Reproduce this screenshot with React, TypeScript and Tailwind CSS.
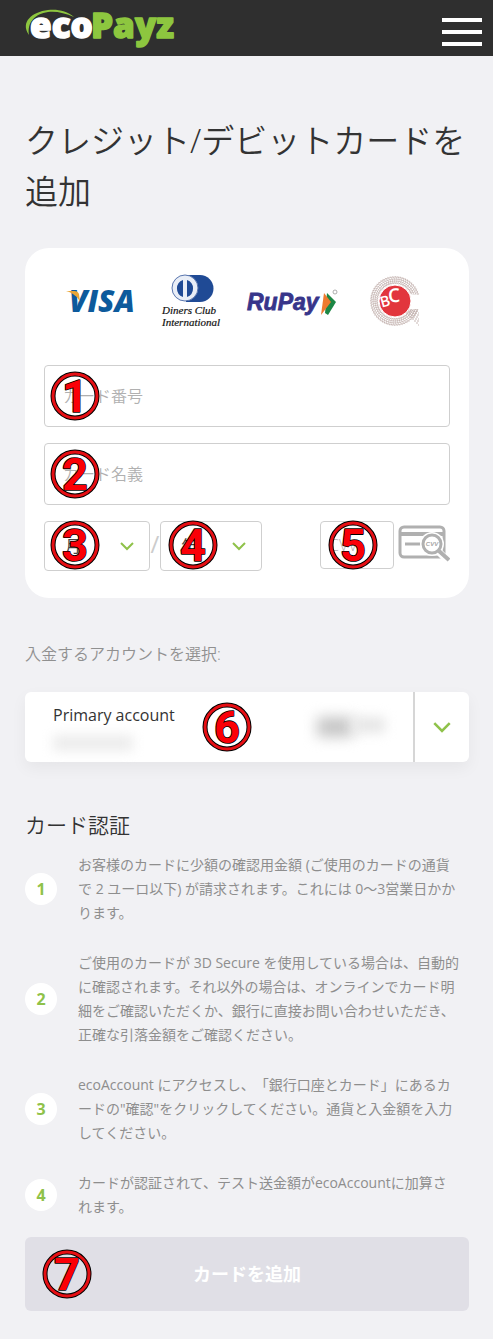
import React, { useState } from 'react';

interface MarkerProps {
  value: number;
  className?: string;
}

interface Step {
  id: number;
  text: string;
}

const steps: Step[] = [
  {
    id: 1,
    text: 'お客様のカードに少額の確認用金額 (ご使用のカードの通貨\nで 2 ユーロ以下) が請求されます。これには 0〜3営業日かか\nります。',
  },
  {
    id: 2,
    text: 'ご使用のカードが 3D Secure を使用している場合は、自動的\nに確認されます。それ以外の場合は、オンラインでカード明\n細をご確認いただくか、銀行に直接お問い合わせいただき、\n正確な引落金額をご確認ください。',
  },
  {
    id: 3,
    text: 'ecoAccount にアクセスし、「銀行口座とカード」にあるカ\nードの"確認"をクリックしてください。通貨と入金額を入力\nしてください。',
  },
  {
    id: 4,
    text: 'カードが認証されて、テスト送金額がecoAccountに加算さ\nれます。',
  },
];

// Red numbered marker that sits on top of a control
const Marker: React.FC<MarkerProps> = ({ value, className = '' }) => (
  <svg
    width="50"
    height="50"
    viewBox="0 0 50 50"
    className={`pointer-events-none absolute overflow-visible ${className}`}
  >
    <circle cx="25" cy="25" r="22" fill="none" stroke="#000" strokeWidth="5" />
    <circle cx="25" cy="25" r="22" fill="none" stroke="#e60f14" strokeWidth="3" />
    <text
      x="25"
      y="41"
      textAnchor="middle"
      fontFamily="Roboto, sans-serif"
      fontWeight="700"
      fontSize="45"
      fill="#fb0007"
      stroke="#000"
      strokeWidth="1.6"
      strokeLinejoin="round"
      paintOrder="stroke"
    >
      {value}
    </text>
  </svg>
);

const Chevron: React.FC<{ className?: string; size?: number }> = ({ className = '', size = 14 }) => (
  <svg
    width={size}
    height={size}
    viewBox="0 0 14 14"
    fill="none"
    stroke="#8fc24a"
    strokeWidth="2"
    className={className}
  >
    <path d="M1 4l6 6 6-6" />
  </svg>
);

const Logo = () => (
  <svg width="156" height="56" viewBox="0 0 156 56" aria-label="ecoPayz" className="overflow-visible">
    <path
      d="M5 35C-4 22 8 12 24 10c10-1 19 1 26 7-9-4-18-6-26-5C11 14 3 22 5 35z"
      fill="#8dc63f"
    />
    <g fontFamily="Open Sans, sans-serif" fontWeight="800" fontSize="35" strokeWidth="1.5" strokeLinejoin="round">
      <text x="6" y="38" fill="#fff" stroke="#fff">eco</text>
      <text x="67" y="38" fill="#8dc63f" stroke="#8dc63f">Payz</text>
    </g>
  </svg>
);

const VisaLogo = () => (
  <svg width="70" height="56" viewBox="0 0 70 56" aria-label="VISA" className="overflow-visible">
    <text
      x="3"
      y="39"
      fontFamily="Open Sans, sans-serif"
      fontWeight="800"
      fontStyle="italic"
      fontSize="30"
      fill="#0d5a9c"
    >
      VISA
    </text>
    <path d="M0 18h8c3 0 4 1 5 3l1 8C12 24 7 20 0 18z" fill="#eaa637" />
  </svg>
);

const DinersLogo = () => (
  <svg width="64" height="56" viewBox="0 0 64 56" aria-label="Diners Club International" className="overflow-visible">
    <path d="M26 2h14a13 13 0 0 1 0 27H26z" fill="#1f4a95" />
    <circle cx="25" cy="15" r="13" fill="#e9eef7" stroke="#5a76ae" strokeWidth="1" />
    <path d="M23 7a9 9 0 0 0 0 17zM27 7a9 9 0 0 1 0 17z" fill="#1f4a95" />
    <g fontFamily="Liberation Serif, serif" fontStyle="italic" fill="#111" stroke="#111" strokeWidth="0.2">
      <text x="2" y="41" fontSize="11">Diners Club</text>
      <text x="2" y="53" fontSize="11">International</text>
    </g>
  </svg>
);

const RuPayLogo = () => (
  <svg width="98" height="56" viewBox="0 0 98 56" aria-label="RuPay" className="overflow-visible">
    <path d="M79 20l9 9-8 13-3-2z" fill="#1d8745" />
    <path d="M76 20l7 9-10 13z" fill="#ee7a2f" />
    <text
      x="-1"
      y="37"
      fontFamily="Liberation Sans, sans-serif"
      fontWeight="700"
      fontStyle="italic"
      fontSize="23"
      fill="#37358a"
      stroke="#37358a"
      strokeWidth="0.8"
    >
      RuPay
    </text>
    <circle cx="87" cy="19" r="2" fill="none" stroke="#999" strokeWidth="0.8" />
  </svg>
);

const BcLogo = () => (
  <svg width="50" height="56" viewBox="0 0 50 56" aria-label="BC">
    <g fill="none" stroke="#b9a5a1">
      {[18, 20, 22, 24].map((r) => (
        <circle key={r} cx="25" cy="28" r={r} strokeWidth="0.6" />
      ))}
      {Array.from({ length: 60 }, (_, i) => (
        <path key={i} d="M25 11Q29 7 25 3" strokeWidth="0.5" transform={`rotate(${i * 6} 25 28)`} />
      ))}
      {[38, 40, 42, 44, 46, 48, 50, 52].map((y) => (
        <path key={y} d={`M${y - 4} ${y}H49`} strokeWidth="0.8" strokeDasharray="2 1" />
      ))}
    </g>
    <path d="M39 21l11 1v14H39z" fill="#fff" />
    <circle cx="25" cy="28" r="16" fill="#e2353d" stroke="#fff" strokeWidth="1" />
    <g fontFamily="Open Sans, sans-serif" fontWeight="600" fill="#fff">
      <text x="10" y="34" fontSize="15" transform="rotate(-16 14 28)">B</text>
      <text x="18" y="29" fontSize="19" transform="rotate(-4 24 22)">C</text>
    </g>
  </svg>
);

const CvvIcon = () => (
  <svg width="52" height="38" viewBox="0 0 52 38" fill="none" aria-hidden="true">
    <rect x="2" y="2" width="44" height="30" rx="4" stroke="#b0b0b0" strokeWidth="3" />
    <path d="M2 9h44" stroke="#b0b0b0" strokeWidth="4" />
    <path d="M7 19h17" stroke="#b0b0b0" strokeWidth="3" />
    <circle cx="34" cy="19" r="12" fill="#fff" />
    <path d="M41 27l9 9" stroke="#fff" strokeWidth="7" />
    <circle cx="34" cy="19" r="9" fill="#fff" stroke="#b0b0b0" strokeWidth="3" />
    <path d="M41 26l10 9" stroke="#b0b0b0" strokeWidth="4" />
    <text
      x="34"
      y="21"
      textAnchor="middle"
      fontFamily="Liberation Sans, sans-serif"
      fontWeight="700"
      fontStyle="italic"
      fontSize="6"
      fill="#a5a5a5"
    >
      CVV
    </text>
  </svg>
);

const inputClass =
  'block w-full rounded border border-[#cfcfcf] bg-white text-base font-[350] text-[#333] placeholder:text-[#b0b0b0] placeholder:opacity-100 outline-none focus:border-[#8fc24a]';

const selectClass =
  'h-[50px] w-full appearance-none rounded border border-[#cfcfcf] bg-white pl-5 text-base text-[#444] outline-none focus:border-[#8fc24a]';

const App: React.FC = () => {
  const [number, setNumber] = useState('');
  const [name, setName] = useState('');
  const [cvv, setCvv] = useState('');

  return (
    <div className="min-h-screen bg-[#f1f1f4] font-['Open_Sans','Noto_Sans_CJK_JP',sans-serif] text-[#333] [text-spacing-trim:space-all]" lang="ja">
      <header className="flex h-14 items-center justify-between bg-[#2f2f2f] pr-[11px] pl-6">
        <a href="#" className="block">
          <Logo />
        </a>
        <button type="button" aria-label="Menu" className="mt-2 flex w-10 flex-col gap-2">
          <span className="h-1 bg-white" />
          <span className="h-1 bg-white" />
          <span className="h-1 bg-white" />
        </button>
      </header>

      <main className="pt-[59px] pr-6 pb-7 pl-[25px]">
        <h1 className="text-[33px] leading-[51px] font-[350] whitespace-pre-line">{'クレジット/デビットカードを\n追加'}</h1>

        <form onSubmit={(e) => e.preventDefault()}>
          {/* Card details */}
          <section className="mt-[31px] rounded-3xl bg-white px-[19px] pt-[25px] pb-[27px]">
            <div className="mb-9 flex items-center justify-between pr-[30px] pl-[22px]">
              <VisaLogo />
              <DinersLogo />
              <RuPayLogo />
              <BcLogo />
            </div>

            <div className="space-y-4">
              <div className="relative">
                <input
                  className={`${inputClass} h-[62px] px-[18px]`}
                  placeholder="カード番号"
                  aria-label="カード番号"
                  value={number}
                  onChange={(e) => setNumber(e.target.value)}
                />
                <Marker value={1} className="top-1.5 left-1.5" />
              </div>
              <div className="relative">
                <input
                  className={`${inputClass} h-[62px] px-[18px]`}
                  placeholder="カード名義"
                  aria-label="カード名義"
                  value={name}
                  onChange={(e) => setName(e.target.value)}
                />
                <Marker value={2} className="top-1.5 left-1.5" />
              </div>

              <div className="flex items-start">
                <div className="relative w-[106px]">
                  <select className={selectClass} aria-label="月">
                    <option>月</option>
                  </select>
                  <Chevron className="pointer-events-none absolute top-[18px] right-4" />
                  <Marker value={3} className="-top-px left-1.5" />
                </div>
                <span className="w-2.5 text-center text-2xl leading-[46px] text-[#ccc]">/</span>
                <div className="relative w-[102px]">
                  <select className={selectClass} aria-label="年">
                    <option>年</option>
                  </select>
                  <Chevron className="pointer-events-none absolute top-[18px] right-4" />
                  <Marker value={4} className="-top-px left-2" />
                </div>
                <div className="relative ml-auto w-[74px]">
                  <input
                    className={`${inputClass} h-12 px-2`}
                    placeholder="CVV"
                    aria-label="CVV"
                    value={cvv}
                    onChange={(e) => setCvv(e.target.value)}
                  />
                  <Marker value={5} className="-top-px left-2" />
                </div>
                <div className="mt-1 ml-1">
                  <CvvIcon />
                </div>
              </div>
            </div>
          </section>

          {/* Account picker */}
          <p id="account-label" className="mt-11 text-base font-[350] text-[#909090]">入金するアカウントを選択:</p>
          <button
            type="button"
            aria-labelledby="account-label"
            className="relative mt-[26px] flex h-[70px] w-full rounded-md bg-white text-left shadow-[0_6px_16px_rgba(0,0,0,0.05)]"
          >
            <span className="flex flex-1 items-center justify-between pr-7 pl-7">
              <span className="flex flex-col gap-2">
                <span className="text-base leading-6">Primary account</span>
                <span className="h-4 w-20 bg-[#ececec] blur-[6px]" />
              </span>
              <span className="flex">
                <span className="h-5 w-9 bg-[#c6c6c6] blur-[7px]" />
                <span className="h-4 w-8 bg-[#e6e6e6] blur-[6px]" />
              </span>
            </span>
            <span className="flex w-14 items-center justify-center self-stretch border-l-2 border-[#d6d6d6]">
              <Chevron size={18} />
            </span>
            <Marker value={6} className="top-2.5 left-[177px]" />
          </button>

          {/* Verification steps */}
          <h2 className="mt-[47px] text-[21px] leading-8 font-[350]">カード認証</h2>
          <ol className="mt-3 space-y-[26px]">
            {steps.map((step) => (
              <li key={step.id} className="flex items-center gap-[21px]">
                <span className="flex size-8 shrink-0 items-center justify-center rounded-full bg-white text-base font-bold text-[#8fc24a]">
                  {step.id}
                </span>
                <p className="text-sm leading-6 whitespace-pre-line text-[#8e8e8e]">{step.text}</p>
              </li>
            ))}
          </ol>

          <div className="relative mt-[18px]">
            <button type="submit" className="h-[74px] w-full rounded-md bg-[#e0dfe6] text-lg font-bold text-white">
              カードを追加
            </button>
            <Marker value={7} className="top-3 left-[17px]" />
          </div>
        </form>
      </main>
    </div>
  );
};

export default App;
